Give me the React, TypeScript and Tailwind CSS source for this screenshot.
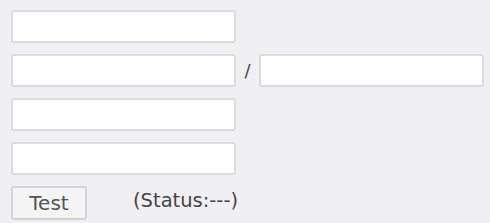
import React from "react";

const field =
  "h-[33px] w-[225px] rounded-[3px] border-2 border-[#dcdcdc] bg-white outline-none";

export default function App() {
  return (
    <div
      className="min-h-screen bg-[#f0f0f2] pl-[11px] pt-[10px] text-[#222]"
      style={{ fontFamily: '"DejaVu Sans", Verdana, sans-serif' }}
    >
      <div className="flex flex-col gap-[11px]">
        <input className={field} />
        <div className="flex items-center">
          <input className={field} />
          <span className="w-[23px] text-center text-[18px] text-[#444]">/</span>
          <input className={field} />
        </div>
        <input className={field} />
        <input className={field} />
        <div className="flex items-center">
          <button className="h-[34px] w-[76px] rounded-[3px] border-2 border-[#d4d4d4] bg-[#f4f4f4] text-[20px] leading-none text-[#555]">
            Test
          </button>
          <span className="ml-[46px] -mt-[5px] text-[19.5px] leading-none text-[#444]">
            (Status:---)
          </span>
        </div>
      </div>
    </div>
  );
}
